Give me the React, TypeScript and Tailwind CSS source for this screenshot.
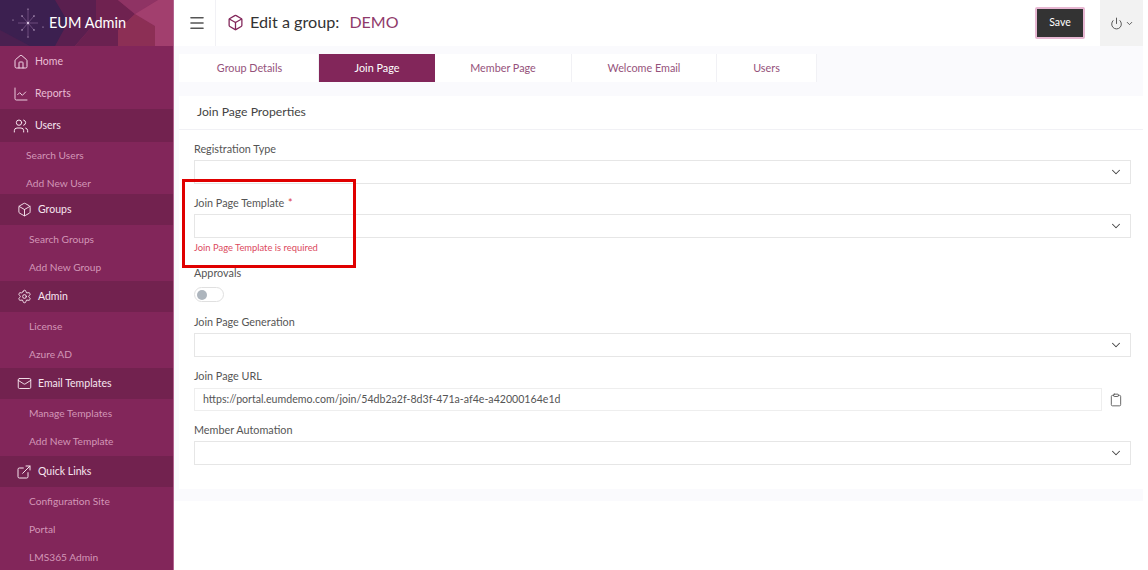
import React from 'react';
import { House, ChartLine, Users, Box, Settings, Mail, ExternalLink, Menu, Power, ChevronDown, Clipboard } from 'lucide-react';

const font = { fontFamily: 'Lato, "Noto Sans", sans-serif' };

function NavHead({ icon, label }: { icon: React.ReactNode; label: string }) {
  return (
    <div className="flex items-center h-[31px] pl-[16px] gap-[6px] bg-[#72224f] text-[#f7e6ef] text-[10.5px]">
      <span className="w-[16px] flex justify-center">{icon}</span>
      <span className="pt-[1px]">{label}</span>
    </div>
  );
}

function NavSub({ label, cls = 'h-[28px] pl-[29px] pt-[2px]' }: { label: string; cls?: string }) {
  return <div className={`flex items-center ${cls} text-[10.2px] text-[#d296b7]`}>{label}</div>;
}

function Banner() {
  return (
    <div className="h-[46px] flex items-center relative overflow-hidden">
      <svg className="absolute inset-0" width="174" height="46" viewBox="0 0 174 46">
        <rect width="174" height="46" fill="#8a2c5f" />
        <polygon points="0,0 75,0 70,46 0,46" fill="#3c2050" />
        <polygon points="0,30 30,46 0,46" fill="#4a2050" />
        <polygon points="55,0 96,0 96,22 75,46 55,46 68,22" fill="#5a1f4f" />
        <polygon points="96,0 118,0 135,14 118,30 96,22" fill="#6f2250" />
        <polygon points="75,46 96,22 118,30 118,46" fill="#6a2150" />
        <polygon points="118,0 158,0 135,14" fill="#8f3364" />
        <polygon points="135,14 155,26 155,46 118,46 118,30" fill="#8c2f55" />
        <polygon points="158,0 174,0 174,46 155,46 155,26 135,14" fill="#a23f6e" />
        <g stroke="#b48fc0" strokeWidth="0.5" opacity="0.8">
          <line x1="28" y1="9" x2="28" y2="37" />
          <line x1="18" y1="23" x2="38" y2="23" />
          <line x1="22" y1="16" x2="34" y2="30" />
          <line x1="34" y1="16" x2="22" y2="30" />
        </g>
        <g fill="#d9c3e0">
          <circle cx="28" cy="23" r="1.2" />
          <circle cx="28" cy="9" r="0.6" />
          <circle cx="28" cy="37" r="0.6" />
          <circle cx="13" cy="20" r="0.6" />
          <circle cx="43" cy="27" r="0.6" />
          <circle cx="22" cy="16" r="0.7" />
          <circle cx="34" cy="16" r="0.7" />
          <circle cx="22" cy="30" r="0.7" />
          <circle cx="34" cy="30" r="0.7" />
        </g>
      </svg>
      <span className="relative ml-[49px] mt-[-1px] text-[14.5px] text-white">EUM Admin</span>
    </div>
  );
}

function Sidebar() {
  const ic = { size: 15, strokeWidth: 1.5 };
  return (
    <div className="w-[174px] shrink-0 h-[570px] overflow-hidden bg-[#82265a] border-r border-[#b2648f]">
      <Banner />
      <div className="h-[32px] flex items-center pl-[13px] gap-[6px] text-[10.5px] text-[#e9bdd4]"><House size={16} strokeWidth={1.5} className="text-[#f3d8e7]" /><span>Home</span></div>
      <div className="h-[31px] flex items-center pl-[13px] gap-[6px] text-[10.5px] text-[#e9bdd4]"><ChartLine size={16} strokeWidth={1.4} className="text-[#f3d8e7]" /><span>Reports</span></div>
      <div className="h-[33px] flex items-center pl-[13px] gap-[6px] bg-[#72224f] text-[10.5px] text-[#f7e6ef]"><Users size={16} strokeWidth={1.5} /><span>Users</span></div>
      <NavSub label="Search Users" cls="h-[27px] pl-[26px]" />
      <NavSub label="Add New User" cls="h-[25px] pt-[5px] pl-[26px]" />
      <NavHead icon={<Box {...ic} />} label="Groups" />
      <NavSub label="Search Groups" />
      <NavSub label="Add New Group" />
      <NavHead icon={<Settings {...ic} />} label="Admin" />
      <NavSub label="License" />
      <NavSub label="Azure AD" />
      <NavHead icon={<Mail {...ic} />} label="Email Templates" />
      <NavSub label="Manage Templates" />
      <NavSub label="Add New Template" cls="h-[29px] pl-[29px] pt-[1px]" />
      <NavHead icon={<ExternalLink size={16} strokeWidth={1.5} />} label="Quick Links" />
      <NavSub label="Configuration Site" />
      <NavSub label="Portal" />
      <NavSub label="LMS365 Admin" />
    </div>
  );
}

function Select() {
  return (
    <div className="h-[24px] ml-[15px] mr-[12px] border border-[#e6e6e6] bg-white flex items-center justify-end pr-[7px]">
      <ChevronDown size={14} strokeWidth={1.8} className="text-[#444]" />
    </div>
  );
}

function Label({ children }: { children: React.ReactNode }) {
  return <div className="ml-[15px] text-[10.8px] leading-[14px] text-[#555]">{children}</div>;
}

const tabs = [
  { label: 'Group Details', w: 'w-[140px] pl-[2px]' },
  { label: 'Join Page', w: 'w-[116px]' },
  { label: 'Member Page', w: 'w-[137px]' },
  { label: 'Welcome Email', w: 'w-[145px]' },
  { label: 'Users', w: 'w-[100px]' },
];

export default function App() {
  return (
    <div className="flex w-[1148px] h-[570px] overflow-hidden bg-white" style={font}>
      <Sidebar />
      <div className="w-[969px] shrink-0 h-[501px] bg-[#fafafd]">
        <div className="h-[46px] bg-white flex items-center">
          <div className="w-[42px] h-[46px] flex items-center justify-center border-r border-[#f1f1f5] pl-[4px]">
            <Menu size={18} strokeWidth={2.2} className="text-[#555]" />
          </div>
          <Box size={17} strokeWidth={1.8} className="ml-[11px] mt-[-1px] text-[#82265a]" />
          <span className="ml-[6px] mt-[-2px] text-[16.2px] text-[#333]">Edit a group:</span>
          <span className="ml-[10px] mt-[-2px] text-[16px] text-[#8f3a6b]">DEMO</span>
          <div className="ml-auto mt-[-1px] w-[50px] h-[32px] bg-[#333] border-[2px] border-[#e7b7d2] rounded-[2px] flex items-center justify-center text-[10.5px] text-white">Save</div>
          <div className="ml-[15px] w-[43px] h-[46px] bg-[#f2f2f2] flex items-center justify-center gap-[2px] text-[#555]">
            <Power size={13} strokeWidth={1.8} />
            <ChevronDown size={9} strokeWidth={2.5} />
          </div>
        </div>
        <div className="flex h-[28px] mt-[8px] ml-[5px] w-[638px] bg-white">
          {tabs.map((t) => (
            <div
              key={t.label}
              className={t.label === 'Join Page'
                ? `${t.w} flex items-center justify-center text-[10.8px] text-white bg-[#82265a]`
                : `${t.w} flex items-center justify-center text-[10.8px] text-[#95527b] border-r border-[#f1f1f5]`}
            >
              {t.label}
            </div>
          ))}
        </div>
        <div className="relative mt-[14px] ml-[5px] w-[964px] h-[393px] bg-white">
          <div className="h-[34px] pl-[18px] flex items-center border-b border-[#f1f1f5] text-[12.2px] text-[#444]">Join Page Properties</div>
          <div className="pt-[12px]">
            <Label>Registration Type</Label>
            <div className="mt-[4px]"><Select /></div>
            <div className="mt-[12px]">
              <Label>Join Page Template <span className="ml-[1px] text-[#dc3545]">*</span></Label>
            </div>
            <div className="mt-[4px]"><Select /></div>
            <div className="mt-[3px] ml-[15px] h-[13px] text-[9.4px] leading-[13px] text-[#dc4a5e]">Join Page Template is required</div>
            <div className="mt-[12px]"><Label>Approvals</Label></div>
            <div className="mt-[7px] ml-[15px] w-[30px] h-[15px] rounded-full border border-[#e0e0e0] bg-white flex items-center pl-[2px]">
              <div className="w-[10px] h-[10px] rounded-full bg-[#adb5bd]" />
            </div>
            <div className="mt-[13px]"><Label>Join Page Generation</Label></div>
            <div className="mt-[4px]"><Select /></div>
            <div className="mt-[12px]"><Label>Join Page URL</Label></div>
            <div className="mt-[5px] ml-[15px] mr-[12px] flex items-center">
              <div className="w-[908px] h-[23px] border border-[#eeeeee] pl-[8px] flex items-center text-[10.6px] text-[#555]">https://portal.eumdemo.com/join/54db2a2f-8d3f-471a-af4e-a42000164e1d</div>
              <Clipboard size={14} strokeWidth={1.5} className="ml-[7px] text-[#555]" />
            </div>
            <div className="mt-[12px]"><Label>Member Automation</Label></div>
            <div className="mt-[4px]"><Select /></div>
          </div>
          <div className="absolute left-[3px] top-[83px] w-[174px] h-[89px] border-[3px] border-[#e00000]" />
        </div>
      </div>
    </div>
  );
}
